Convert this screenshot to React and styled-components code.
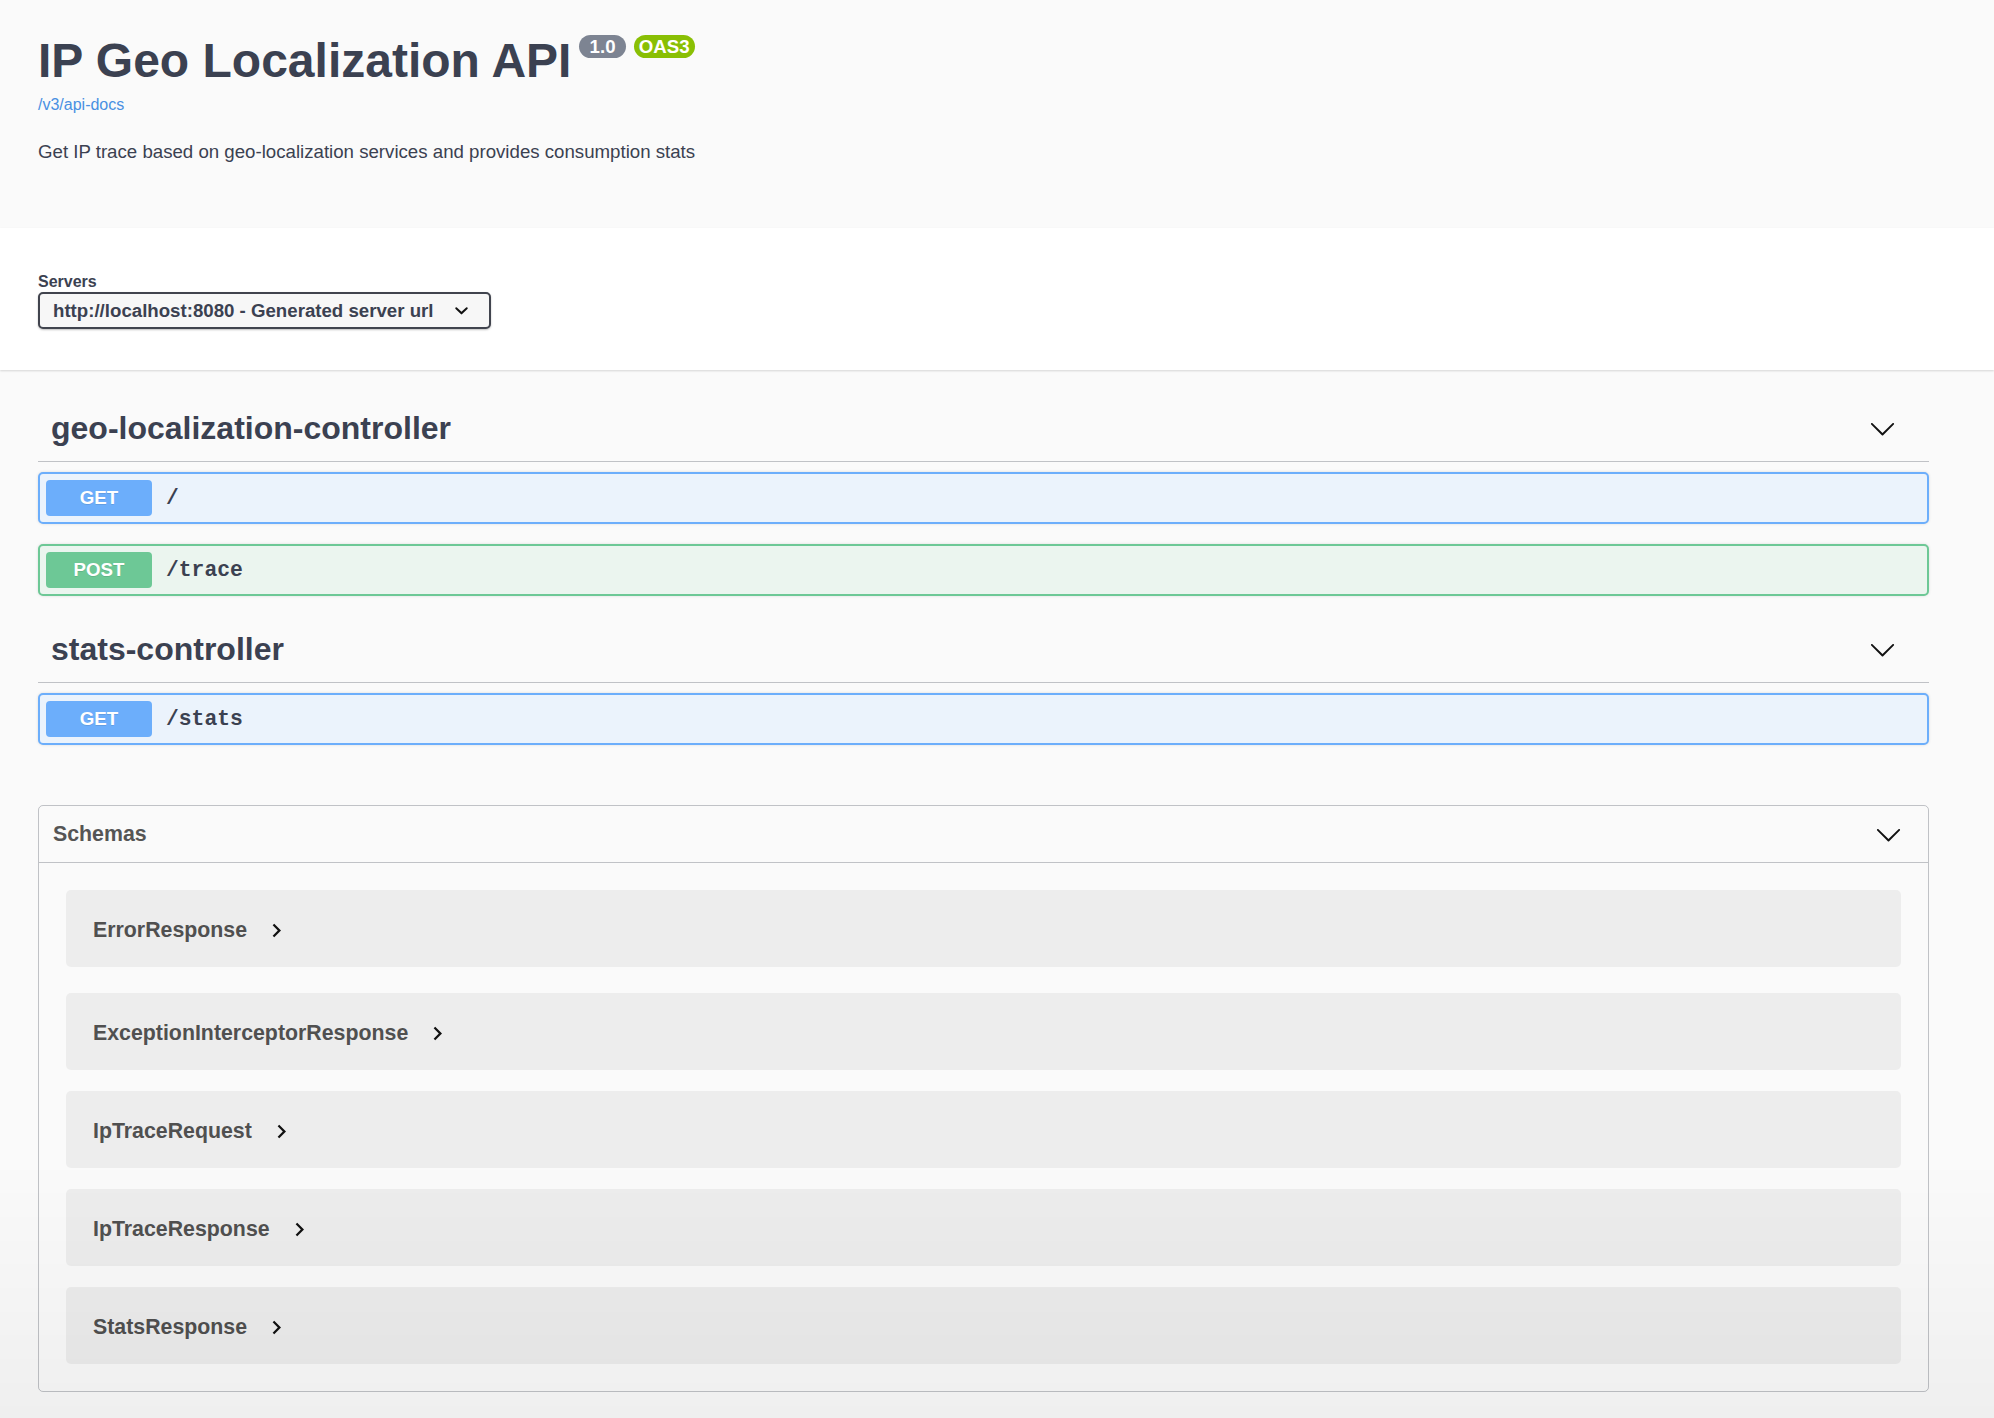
import React from 'react';
import styled, { createGlobalStyle } from 'styled-components';

const GlobalStyle = createGlobalStyle`
  html, body {
    margin: 0;
    padding: 0;
  }
  body {
    background: #fafafa;
    font-family: "Liberation Sans", Arial, sans-serif;
    color: #3b4151;
  }
  body::after {
    content: '';
    position: fixed;
    left: 0;
    right: 0;
    bottom: 0;
    height: 260px;
    background: linear-gradient(rgba(0, 0, 0, 0), rgba(0, 0, 0, 0.045));
    pointer-events: none;
  }
`;

const Wrapper = styled.div`
  max-width: 1891px;
  margin-left: 38px;
`;

const InfoHeader = styled.header`
  background: #fafafa;
  padding: 33px 0 64px;
`;

const TitleRow = styled.h2`
  display: flex;
  align-items: flex-start;
  margin: 0;
  font-size: 48px;
  line-height: 56px;
  font-weight: 700;
  color: #3b4151;
`;

const VersionBadge = styled.small`
  margin: 2px 0 0 ${({ $first }) => ($first ? '8px' : '8px')};
  padding: 1px 5px;
  border-radius: 57px;
  background: ${({ $color }) => $color};
  color: #fff;
  font-size: 18.67px;
  line-height: 21px;
  font-weight: 700;
  white-space: pre;
`;

const DocsLink = styled.a`
  display: block;
  margin-top: 6px;
  font-size: 16px;
  line-height: 20px;
  color: #4990e2;
  text-decoration: none;
`;

const Description = styled.p`
  margin: 25px 0 0;
  font-size: 18.67px;
  line-height: 24px;
  color: #3b4151;
`;

const SchemeContainer = styled.section`
  background: #fff;
  box-shadow: 0 1px 2px 0 rgba(0, 0, 0, 0.15);
  padding: 44px 0 41px;
  position: relative;
`;

const ServersLabel = styled.span`
  display: block;
  font-size: 16px;
  line-height: 19px;
  font-weight: 700;
  margin-bottom: 1px;
  color: #3b4151;
`;

const SelectBox = styled.div`
  display: flex;
  align-items: center;
  justify-content: space-between;
  box-sizing: border-box;
  width: 453px;
  height: 37px;
  padding: 0 14px 0 13px;
  border: 2px solid #41444e;
  border-radius: 5px;
  background: #f7f7f7;
  box-shadow: 0 1px 2px 0 rgba(0, 0, 0, 0.25);
  font-size: 18.67px;
  font-weight: 700;
  color: #3b4151;
  white-space: nowrap;
`;

const Main = styled.main`
  padding-top: 25px;
`;

const TagHeader = styled.div`
  display: flex;
  align-items: center;
  padding: 13px 33px 13px 13px;
  margin-bottom: 10px;
  border-bottom: 1px solid rgba(59, 65, 81, 0.3);
`;

const TagTitle = styled.h3`
  flex: 1;
  margin: 0;
  font-size: 32px;
  line-height: 40px;
  font-weight: 700;
  color: #3b4151;
`;

const methodColors = {
  GET: { main: '#6caefb', border: '#6caefb', bg: '#ebf3fc' },
  POST: { main: '#6dc896', border: '#6dc896', bg: '#ebf5ef' },
};

const OpBlock = styled.div`
  display: flex;
  align-items: center;
  padding: 6px;
  margin-bottom: 20px;
  border: 2px solid ${({ $method }) => methodColors[$method].border};
  border-radius: 5px;
  background: ${({ $method }) => methodColors[$method].bg};
  box-shadow: 0 0 3px rgba(0, 0, 0, 0.12);
`;

const MethodBadge = styled.span`
  width: 106px;
  height: 36px;
  line-height: 36px;
  border-radius: 4px;
  background: ${({ $method }) => methodColors[$method].main};
  color: #fff;
  text-align: center;
  font-size: 18.67px;
  font-weight: 700;
  text-shadow: 0 1px 0 rgba(0, 0, 0, 0.1);
`;

const OpPath = styled.span`
  margin-left: 14px;
  font-family: "Liberation Mono", "Courier New", monospace;
  font-size: 21.33px;
  font-weight: 700;
  color: #3b4151;
`;

const ModelsBox = styled.section`
  margin: 60px 0 20px;
  border: 1px solid rgba(59, 65, 81, 0.3);
  border-radius: 5px;
`;

const ModelsHeader = styled.div`
  display: flex;
  align-items: center;
  justify-content: space-between;
  height: 56px;
  padding: 0 26px 0 14px;
  border-bottom: 1px solid rgba(59, 65, 81, 0.3);
`;

const ModelsTitle = styled.h4`
  margin: 0;
  font-size: 21.33px;
  font-weight: 700;
  color: #555;
`;

const ModelsList = styled.div`
  display: flex;
  flex-direction: column;
  padding: 27px;
`;

const ModelItem = styled.div`
  display: flex;
  align-items: center;
  box-sizing: border-box;
  height: 77px;
  padding: 3px 27px 0;
  margin-bottom: 21px;
  border-radius: 5px;
  background: #ededed;

  &:first-child {
    margin-bottom: 26px;
  }
  &:last-child {
    margin-bottom: 0;
  }
`;

const ModelName = styled.span`
  font-size: 21.33px;
  font-weight: 700;
  color: #505050;
`;

const ToggleIcon = styled.svg`
  flex-shrink: 0;
  margin-left: ${({ $gap }) => $gap || 0}px;
  fill: #111;
`;

const ArrowDown = ({ size = 27 }) => (
  <ToggleIcon width={size} height={size} viewBox="0 0 20 20">
    <path d="M17.418 6.109c.272-.268.709-.268.979 0s.271.701 0 .969l-7.908 7.83c-.27.268-.707.268-.979 0l-7.908-7.83c-.27-.268-.27-.701 0-.969.271-.268.709-.268.979 0L10 13.25l7.418-7.141z" />
  </ToggleIcon>
);

const SelectArrow = () => (
  <ToggleIcon width={27} height={27} viewBox="0 0 20 20">
    <path d="M13.418 7.859a.695.695 0 01.978 0 .68.68 0 010 .969l-3.908 3.83a.697.697 0 01-.979 0l-3.908-3.830a.68.68 0 010-.969.695.695 0 01.978 0L10 11z" />
  </ToggleIcon>
);

const ArrowRight = () => (
  <ToggleIcon $gap={16} width={27} height={27} viewBox="0 0 24 24">
    <path d="M10 6L8.59 7.41 13.17 12l-4.58 4.59L10 18l6-6z" />
  </ToggleIcon>
);

const tags = [
  {
    name: 'geo-localization-controller',
    ops: [
      { method: 'GET', path: '/' },
      { method: 'POST', path: '/trace' },
    ],
  },
  {
    name: 'stats-controller',
    ops: [{ method: 'GET', path: '/stats' }],
  },
];

const schemas = [
  'ErrorResponse',
  'ExceptionInterceptorResponse',
  'IpTraceRequest',
  'IpTraceResponse',
  'StatsResponse',
];

const App = () => (
  <>
    <GlobalStyle />
    <InfoHeader>
      <Wrapper>
        <TitleRow>
          IP Geo Localization API
          <VersionBadge $first $color="#7d8492">{' 1.0 '}</VersionBadge>
          <VersionBadge $color="#89bf04">OAS3</VersionBadge>
        </TitleRow>
        <DocsLink href="#">/v3/api-docs</DocsLink>
        <Description>
          Get IP trace based on geo-localization services and provides consumption stats
        </Description>
      </Wrapper>
    </InfoHeader>

    <SchemeContainer>
      <Wrapper>
        <ServersLabel>Servers</ServersLabel>
        <SelectBox>
          <span>http://localhost:8080 - Generated server url</span>
          <SelectArrow />
        </SelectBox>
      </Wrapper>
    </SchemeContainer>

    <Main>
      <Wrapper>
        {tags.map((tag) => (
          <section key={tag.name}>
            <TagHeader>
              <TagTitle>{tag.name}</TagTitle>
              <ArrowDown />
            </TagHeader>
            {tag.ops.map((op) => (
              <OpBlock key={op.method + op.path} $method={op.method}>
                <MethodBadge $method={op.method}>{op.method}</MethodBadge>
                <OpPath>{op.path}</OpPath>
              </OpBlock>
            ))}
          </section>
        ))}

        <ModelsBox>
          <ModelsHeader>
            <ModelsTitle>Schemas</ModelsTitle>
            <ArrowDown />
          </ModelsHeader>
          <ModelsList>
            {schemas.map((name) => (
              <ModelItem key={name}>
                <ModelName>{name}</ModelName>
                <ArrowRight />
              </ModelItem>
            ))}
          </ModelsList>
        </ModelsBox>
      </Wrapper>
    </Main>
  </>
);

export default App;
